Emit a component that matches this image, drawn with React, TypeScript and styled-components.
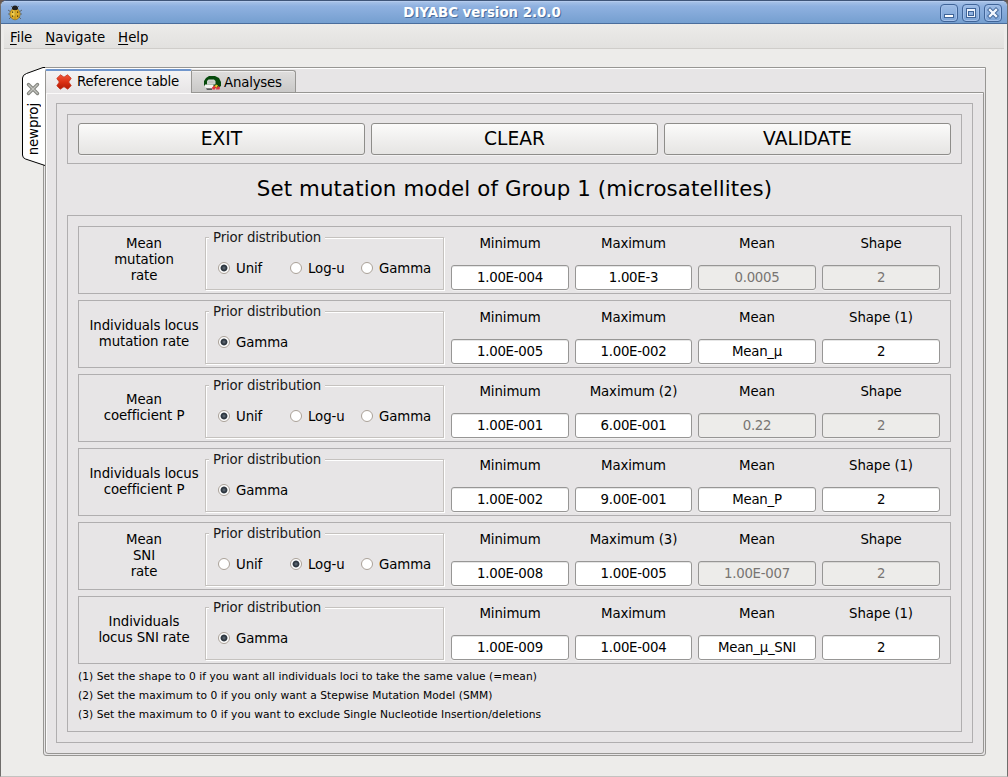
import React from 'react';
import styled, { createGlobalStyle, css } from 'styled-components';

const GlobalStyle = createGlobalStyle`
  * { box-sizing: border-box; }
  body {
    margin: 0;
    background: #6b5a50;
    font-family: "DejaVu Sans", sans-serif;
    font-size: 13.33px;
    letter-spacing: -0.1px;
    line-height: 16px;
    color: #000;
  }
`;

const Window = styled.div`
  width: 1008px;
  height: 777px;
  display: flex;
  flex-direction: column;
  background: #edecea;
  border: 1px solid #6f6d6b;
  border-top-color: #3f5578;
  border-bottom-color: #c4c2c0;
  border-radius: 6px 6px 0 0;
  overflow: hidden;
`;

const TitleBar = styled.header`
  height: 23px;
  flex: none;
  display: flex;
  align-items: center;
  padding: 0 5px 0 6px;
  background: linear-gradient(#a5c0e6, #8fb1e0 20%, #759fd0);
  border-top: 1px solid #b4cbee;
  border-bottom: 1px solid #4a6d9c;
`;

const Title = styled.h1`
  flex: 1;
  margin: 0;
  padding-left: 1px;
  text-align: center;
  font-size: 13.33px;
  letter-spacing: 0;
  font-weight: bold;
  line-height: 16px;
  color: #fff;
  text-shadow: 1px 1px 0 #4a6d9c;
`;

const WindowButtons = styled.div`
  display: flex;
  gap: 4px;
`;

const WindowButton = styled.button`
  width: 18px;
  height: 18px;
  padding: 0;
  border: 1px solid #3f6498;
  border-radius: 4px;
  background: linear-gradient(#9dbce6, #7ba3d6);
  box-shadow: inset 0 0 0 1px #a3c0ea;
  svg { display: block; }
`;

const MenuBar = styled.nav`
  height: 25px;
  flex: none;
  display: flex;
  gap: 13px;
  margin: 0 3px;
  padding: 6px 6px 0;
  letter-spacing: 0;
  background: linear-gradient(#ecebe9, #e2e1df);
  border-bottom: 1px solid #cfcdca;
`;

const Mnemonic = styled.span`
  text-decoration: underline;
  text-underline-offset: 2px;
  text-decoration-thickness: 1px;
`;

const Workspace = styled.main`
  flex: 1;
  min-height: 0;
  display: flex;
  align-items: flex-start;
  padding: 18px 0 0 21px;
`;

const SideTab = styled.div`
  position: relative;
  z-index: 1;
  flex: none;
  width: 23px;
  height: 99px;
  display: flex;
  flex-direction: column;
  align-items: center;
  padding: 15px 1px 0 0;
`;

const SideTabShape = styled.svg`
  position: absolute;
  inset: 0;
  z-index: -1;
`;

const SideTabLabel = styled.span`
  margin: 7px -2px 0 0;
  writing-mode: vertical-rl;
  transform: rotate(180deg);
  line-height: 16px;
`;

const Notebook = styled.section`
  width: 943px;
  height: 689px;
  flex: none;
  display: flex;
  flex-direction: column;
  margin-left: -2px;
  padding: 1px;
  background: #e7e5e6;
  border: 1px solid #979693;
  border-radius: 0 0 3px 3px;
  box-shadow: inset 0 1px 0 #fff;
`;

const TabStrip = styled.div`
  height: 24px;
  flex: none;
  display: flex;
  align-items: flex-end;
  margin-bottom: -1px;
  letter-spacing: -0.2px;
`;

const Tab = styled.div<{ $active?: boolean }>`
  position: relative;
  display: flex;
  align-items: center;
  white-space: nowrap;
  border: 1px solid #979693;
  border-bottom: 0;
  ${({ $active }) =>
    $active
      ? css`
          width: 147px;
          height: 24px;
          gap: 5px;
          padding: 0 0 0 10px;
          border-top: 2px solid #7096cc;
          border-radius: 2px 2px 0 0;
          background: linear-gradient(#f4f3f3, #e7e5e6);
        `
      : css`
          width: 104px;
          height: 22px;
          gap: 3px;
          margin-bottom: 1px;
          padding: 2px 0 0 12px;
          border-left: 0;
          border-radius: 0 3px 0 0;
          background: linear-gradient(#dfdedd, #c9c8c7);
          box-shadow: inset 0 1px 0 #efeeee;
        `}
`;

const Page = styled.div`
  flex: 1;
  min-height: 0;
  display: flex;
  padding: 10px;
  border: 1px solid #979693;
  border-radius: 0 0 3px 3px;
  box-shadow: inset 1px 1px 0 #fbfafa;
`;

const Frame = styled.div`
  border: 1px solid #b0aeaf;
`;

const Form = styled(Frame)`
  flex: 1;
  min-width: 0;
  display: flex;
  flex-direction: column;
  padding: 10px;
`;

const Toolbar = styled(Frame)`
  height: 50px;
  flex: none;
  display: flex;
  gap: 6px;
  padding: 8px 10px;
`;

const ActionButton = styled.button`
  flex: 1;
  padding: 0 0 1px;
  font: 18.67px/22px "DejaVu Sans", sans-serif;
  color: #000;
  background: linear-gradient(#fbfbfa, #f0efee 50%, #e6e5e3);
  border: 1px solid #8e8d8a;
  border-radius: 3px;
  box-shadow: 0 1px 0 #f3f2f2;
`;

const Heading = styled.h2`
  height: 51px;
  flex: none;
  margin: 0;
  text-align: center;
  font-size: 21.33px;
  letter-spacing: 0.11px;
  font-weight: normal;
  line-height: 49px;
`;

const Parameters = styled(Frame)`
  flex: 1;
  min-height: 0;
  display: flex;
  flex-direction: column;
  gap: 6px;
  padding: 10px;
`;

const ParameterRow = styled(Frame)`
  height: 68px;
  flex: none;
  display: grid;
  grid-template-columns: 115px 240px 118px 117px 118px 118px;
  column-gap: 6px;
  padding-left: 5px;
`;

const RowLabel = styled.div`
  align-self: center;
  margin-right: -5px;
  padding-bottom: 1px;
  text-align: center;
  white-space: pre-line;
`;

const Prior = styled.div`
  position: relative;
  width: 239px;
  height: 53px;
  margin-top: 10px;
  display: flex;
  padding: 9px 0 0 12px;
  border: 1px solid #c5c2bf;
  box-shadow: inset 1px 1px 0 #fff, 1px 1px 0 #fff;
`;

const PriorTitle = styled.span`
  position: absolute;
  top: -8px;
  left: 3px;
  padding: 0 4px;
  background: #e7e5e6;
  color: #1a1a1a;
  letter-spacing: -0.15px;
`;

const Option = styled.label<{ $width: number }>`
  width: ${({ $width }) => $width}px;
  flex: none;
  display: flex;
  align-items: center;
  gap: 6px;
  white-space: nowrap;
`;

const OptionText = styled.span`
  padding-top: 1px;
`;

const Dot = styled.span<{ $on: boolean }>`
  width: 12px;
  height: 12px;
  flex: none;
  border: 1px solid #aaa198;
  border-radius: 50%;
  background: ${({ $on }) =>
    $on ? 'radial-gradient(circle at 50% 50%, #6c7680 0, #29323c 2.4px, #3d444c 3px, #fff 3.9px)' : '#fff'};
`;

const Field = styled.div`
  display: flex;
  flex-direction: column;
  justify-content: space-between;
  padding: 9px 0 3px;
  text-align: center;
`;

const Value = styled.div<{ $disabled: boolean }>`
  height: 25px;
  line-height: 23px;
  letter-spacing: -0.25px;
  border: 1px solid #979695;
  border-radius: 3px;
  color: ${({ $disabled }) => ($disabled ? '#787572' : '#000')};
  background: ${({ $disabled }) => ($disabled ? '#edecea' : '#fff')};
  box-shadow: inset 0 1px 0 ${({ $disabled }) => ($disabled ? '#d9d8d6' : '#e6e6e6')}, 0 1px 0 #f1f0f0;
`;

const Notes = styled.div`
  margin: -3px 0;
  font-size: 10.67px;
  letter-spacing: 0.05px;
  line-height: 19px;
`;

type Row = {
  label: string;
  options: string[];
  selected: string;
  maxNote?: string;
  shapeNote?: string;
  values: string[];
  locked?: boolean;
};

const all = ['Unif', 'Log-u', 'Gamma'];
const optionWidths: Record<string, number> = { Unif: 72, 'Log-u': 71, Gamma: 75 };

const rows: Row[] = [
  { label: 'Mean\nmutation\nrate', options: all, selected: 'Unif', values: ['1.00E-004', '1.00E-3', '0.0005', '2'], locked: true },
  { label: 'Individuals locus\nmutation rate', options: ['Gamma'], selected: 'Gamma', shapeNote: ' (1)', values: ['1.00E-005', '1.00E-002', 'Mean_μ', '2'] },
  { label: 'Mean\ncoefficient P', options: all, selected: 'Unif', maxNote: ' (2)', values: ['1.00E-001', '6.00E-001', '0.22', '2'], locked: true },
  { label: 'Individuals locus\ncoefficient P', options: ['Gamma'], selected: 'Gamma', shapeNote: ' (1)', values: ['1.00E-002', '9.00E-001', 'Mean_P', '2'] },
  { label: 'Mean\nSNI\nrate', options: all, selected: 'Log-u', maxNote: ' (3)', values: ['1.00E-008', '1.00E-005', '1.00E-007', '2'], locked: true },
  { label: 'Individuals\nlocus SNI rate', options: ['Gamma'], selected: 'Gamma', shapeNote: ' (1)', values: ['1.00E-009', '1.00E-004', 'Mean_μ_SNI', '2'] },
];

const BeetleIcon = () => (
  <svg width="16" height="16" viewBox="0 0 16 16">
    <path d="M4 1l2 2M12 1l-2 2M1 5l3 2M15 5l-3 2M1 9h3M15 9h-3M2 14l3-3M14 14l-3-3" stroke="#5d6878" fill="none" />
    <ellipse cx="8" cy="9" rx="5.2" ry="5.8" fill="#dca926" stroke="#8a6a18" strokeWidth=".6" />
    <ellipse cx="6.5" cy="8.5" rx="2" ry="3" fill="#f2cf50" />
    <path d="M5 3.500a3 3 0 0 1 6 0l-1 1.500h-4z" fill="#202020" />
    <path d="M8 5v9.500" stroke="#a07c1c" strokeWidth=".6" />
    <path d="M5 6.500h1.200v1.200H5zM10 6.500h1.200v1.200H10zM5 10.500h1.200v1.200H5zM10 10.500h1.200v1.200H10z" fill="#3b2c08" />
  </svg>
);

const RedCrossIcon = () => (
  <svg width="16" height="16" viewBox="0 0 16 16">
    <defs>
      <linearGradient id="red" x1="0" y1="0" x2="0" y2="1">
        <stop offset="0" stopColor="#f0573c" />
        <stop offset=".5" stopColor="#dc3012" />
        <stop offset="1" stopColor="#b01a04" />
      </linearGradient>
    </defs>
    <path d="M4.500 .8L8 3.200l3.500-2.400 3.700 3.400L12.700 8l2.500 3.600-3.400 3.600L8 12.700l-3.800 2.500L.8 11.800 3.300 8 .8 4.400z" fill="url(#red)" stroke="#c6331c" strokeWidth=".8" strokeLinejoin="round" />
  </svg>
);

const AnalysesIcon = () => (
  <svg width="17" height="14" viewBox="0 0 17 14">
    <path d="M0 9V5l2-3 3-2h6l4 2 2 4v4l-3 2H3z" fill="#064a0c" />
    <path d="M3 5l1.500-1.500H10L11.500 5v3.500H3z" fill="#cfd3cf" />
    <path d="M4.500 5.500h5v1h-5z" fill="#b4bab5" />
    <path d="M1 8.500h8.500v3.500H2.500L1 11z" fill="#f3f3f2" />
    <path d="M2 12.500h6v1.200H3z" fill="#2c3030" />
    <path d="M8 11.500l2.500-2 1.500 1.500-1 2.500H8.500z" fill="#e0303a" />
    <path d="M10.500 10l2-1.500 1.500 1-1.500 2.500z" fill="#f0c42c" />
    <path d="M12 12.500l2.500-2.500 1.500 1.500-.5 2H12z" fill="#d8384a" />
  </svg>
);

const GrayCrossIcon = () => (
  <svg width="14" height="14" viewBox="0 0 14 14">
    <path d="M2.500 2.500l9 9M11.500 2.500l-9 9" stroke="#84857f" strokeWidth="3.400" strokeLinecap="round" />
    <path d="M2.700 2.700l8.600 8.600M11.300 2.700l-8.600 8.600" stroke="#c3c4bf" strokeWidth="1.300" strokeLinecap="round" />
  </svg>
);

export default function App() {
  return (
    <>
      <GlobalStyle />
      <Window>
        <TitleBar>
          <BeetleIcon />
          <Title>DIYABC version 2.0.0</Title>
          <WindowButtons>
            <WindowButton aria-label="Minimize">
              <svg width="16" height="16"><rect x="3.500" y="9.500" width="9" height="3" fill="#fff" stroke="#3f6498" /></svg>
            </WindowButton>
            <WindowButton aria-label="Maximize">
              <svg width="16" height="16">
                <rect x="3.500" y="3.500" width="9" height="9" fill="#eef4fd" stroke="#3f6498" />
                <rect x="5.500" y="6.500" width="5" height="4" fill="#8fb1e0" stroke="#3f6498" />
              </svg>
            </WindowButton>
            <WindowButton aria-label="Close">
              <svg width="16" height="16">
                <path d="M5 5l6 6M11 5l-6 6" stroke="#3f6498" strokeWidth="4.200" strokeLinecap="square" />
                <path d="M5 5l6 6M11 5l-6 6" stroke="#f4f8ff" strokeWidth="2.400" strokeLinecap="square" />
              </svg>
            </WindowButton>
          </WindowButtons>
        </TitleBar>
        <MenuBar>
          {['File', 'Navigate', 'Help'].map((m) => (
            <span key={m}><Mnemonic>{m[0]}</Mnemonic>{m.slice(1)}</span>
          ))}
        </MenuBar>
        <Workspace>
          <SideTab>
            <SideTabShape width="23" height="99" viewBox="0 0 23 99">
              <path d="M23 .5h-2L4.500 6.500Q.5 8 .5 11V88q0 3 3 4L23 98.500" fill="#fff" stroke="#000" />
            </SideTabShape>
            <GrayCrossIcon />
            <SideTabLabel>newproj</SideTabLabel>
          </SideTab>
          <Notebook>
            <TabStrip>
              <Tab $active><RedCrossIcon />Reference table</Tab>
              <Tab><AnalysesIcon />Analyses</Tab>
            </TabStrip>
            <Page>
              <Form>
                <Toolbar>
                  <ActionButton>EXIT</ActionButton>
                  <ActionButton>CLEAR</ActionButton>
                  <ActionButton>VALIDATE</ActionButton>
                </Toolbar>
                <Heading>Set mutation model of Group 1 (microsatellites)</Heading>
                <Parameters>
                  {rows.map((row) => {
                    const names = ['Minimum', 'Maximum' + (row.maxNote ?? ''), 'Mean', 'Shape' + (row.shapeNote ?? '')];
                    return (
                      <ParameterRow key={row.label}>
                        <RowLabel>{row.label}</RowLabel>
                        <Prior>
                          <PriorTitle>Prior distribution</PriorTitle>
                          {row.options.map((o) => (
                            <Option key={o} $width={optionWidths[o]}>
                              <Dot $on={o === row.selected} />
                              <OptionText>{o}</OptionText>
                            </Option>
                          ))}
                        </Prior>
                        {names.map((name, i) => (
                          <Field key={name}>
                            <span>{name}</span>
                            <Value $disabled={!!row.locked && i > 1}>{row.values[i]}</Value>
                          </Field>
                        ))}
                      </ParameterRow>
                    );
                  })}
                  <Notes>
                    <div>(1) Set the shape to 0 if you want all individuals loci to take the same value (=mean)</div>
                    <div>(2) Set the maximum to 0 if you only want a Stepwise Mutation Model (SMM)</div>
                    <div>(3) Set the maximum to 0 if you want to exclude Single Nucleotide Insertion/deletions</div>
                  </Notes>
                </Parameters>
              </Form>
            </Page>
          </Notebook>
        </Workspace>
      </Window>
    </>
  );
}
